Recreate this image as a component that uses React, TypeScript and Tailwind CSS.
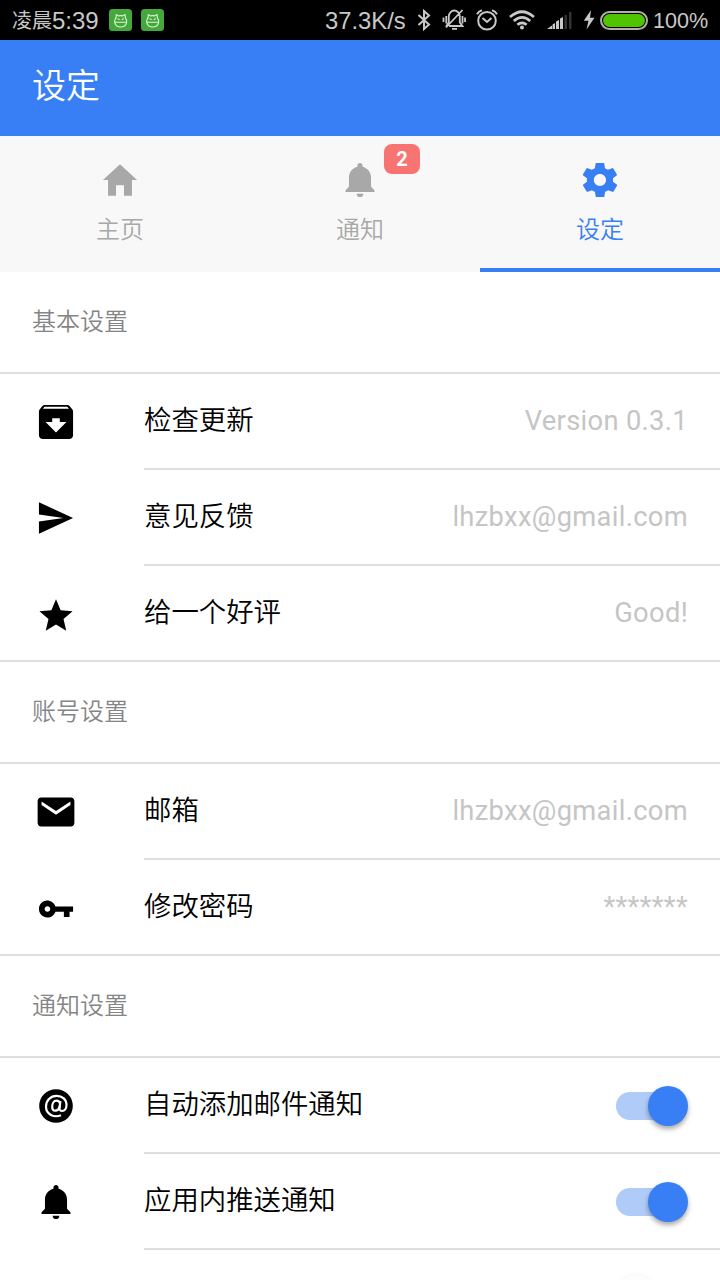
import React from "react";
import {
  IoMdHome,
  IoMdNotifications,
  IoMdSettings,
  IoMdArchive,
  IoMdSend,
  IoMdStar,
  IoMdMail,
  IoMdKey,
} from "react-icons/io";
import type { IconType } from "react-icons";

function CatBadge() {
  return (
    <svg width="23" height="22" viewBox="0 0 23 22" fill="none">
      <rect width="23" height="22" rx="3.5" fill="#43a93d" />
      <g stroke="#dcf0d0" strokeWidth="1.1" strokeLinecap="round" strokeLinejoin="round">
        <path d="M7 8.800 7.300 5.500 9.300 6.900Q11.700 6.300 14 6.900L16 5.500 16.400 8.800" />
        <path d="M7 8.800C4 13 6.500 18 11.700 18S19.400 13 16.400 8.800" />
        <path d="M6 13.200H17.400M9 9.800l1.300.7M14.400 9.800l-1.300.7" />
      </g>
    </svg>
  );
}

function StatusBar() {
  return (
    <div className="flex h-10 items-center bg-black pl-3 text-[#c8c8c8]">
      <div className="flex h-10 w-[97px] items-center whitespace-nowrap leading-10">
        <span className="w-10 pt-px text-[20px]">凌晨</span>
        <span className="pt-px text-[24px]">5:39</span>
      </div>
      <div className="flex gap-[9px]">
        <CatBadge />
        <CatBadge />
      </div>
      <span className="ml-[161px] w-[91px] whitespace-nowrap pt-[2px] text-[23.800px] leading-10">37.3K/s</span>
      <svg width="16" height="24" viewBox="0 0 16 24" fill="none" stroke="currentColor" strokeWidth="2">
        <path d="M2.500 7 13 16.500 8 21V3l5 4.500L2.500 17" />
      </svg>
      <svg className="ml-[10px]" width="24" height="24" viewBox="0 0 24 24" fill="none" stroke="currentColor" strokeWidth="1.800">
        <path d="M7 18H20.500L17.800 14.500V8.500C17.500 5 15 2.500 12.300 2.500S7 5 6.800 8.500V14.500L4 18.500M10 20.800h5M20.500 2 4 19.500M4.300 8v7.500M1.500 9.500v4.500M20.500 8v7.500M23 9.500v4.500" />
      </svg>
      <svg className="ml-[9px]" width="24" height="24" viewBox="0 0 24 24" fill="none" stroke="currentColor" strokeWidth="2">
        <circle cx="12" cy="12.800" r="8.800" />
        <path d="M7.500 10 12 14l4.500-4M2 6.300Q3.500 3.300 7 2.300M22 6.300Q20.500 3.300 17 2.300" />
      </svg>
      <svg className="ml-[10px]" width="26" height="22" viewBox="0 0 26 22" fill="none" stroke="currentColor" strokeWidth="2.700">
        <path d="M1 8Q13-2.500 25 8M4.800 12Q13 4.800 21.200 12M8.400 15.800Q13 11.800 17.600 15.800" />
        <circle cx="13" cy="18.500" r="2" fill="currentColor" stroke="none" />
      </svg>
      <svg className="ml-3" width="25" height="18" viewBox="0 0 25 18" fill="currentColor">
        <path d="M0 18 5 14.500V18ZM5.500 13.500 8 12V18H5.500ZM9 10.500 12 9V18H9ZM13 7.500 16 6V18h-3Z" />
        <path fill="#333" d="M17.500 4h2.500v14h-2.500ZM22 1h2.500v17H22Z" />
      </svg>
      <svg className="ml-[11px]" width="12" height="20" viewBox="0 0 12 20" fill="currentColor">
        <path d="M8 0 .8 10.800H5.500L3.500 19.500 11.500 7.800H7Z" />
      </svg>
      <svg className="ml-[5px]" width="48" height="19" viewBox="0 0 48 19">
        <rect x="1" y="1" width="46" height="17" rx="8.500" fill="black" stroke="#b5aeae" strokeWidth="2" />
        <rect x="3" y="3" width="42" height="13" rx="6.500" fill="#50c400" />
      </svg>
      <span className="ml-[5px] pt-px text-[21.600px] leading-10">100%</span>
    </div>
  );
}

interface TabProps {
  icon: IconType;
  label: string;
  active?: boolean;
  badge?: string;
}

function Tab({ icon: Icon, label, active, badge }: TabProps) {
  return (
    <div
      className={`relative flex flex-1 flex-col items-center border-b-4 pt-[23px] ${
        active ? "border-[#387ef5] text-[#387ef5]" : "border-transparent text-[#a8a8a8]"
      }`}
    >
      <Icon size={42} />
      <span className="mt-[11px] text-[24px] font-[350] leading-9">{label}</span>
      {badge && (
        <span className="absolute left-36 top-2 flex h-[30px] w-9 items-center justify-center rounded-lg bg-[#f87472] font-[Roboto,sans-serif] text-[20px] font-bold text-white">
          {badge}
        </span>
      )}
    </div>
  );
}

function AtCircle() {
  return (
    <svg width="34" height="34" viewBox="0 0 34 34" fill="none">
      <circle cx="17" cy="17" r="16.800" fill="black" />
      <g stroke="white" strokeWidth="2.200">
        <path d="M22 26.300C15 29 7 25.500 7 17.500 7 11.500 11.500 6.800 17.500 6.800 23.500 6.800 27.500 10.500 27.500 15.800 27.500 19.800 25.500 22 23.200 22 21.200 22 20.300 20.800 20.500 18.800L21.400 12.200" />
        <path d="M21 14.500C20.500 12.500 19.300 11.700 17.500 11.700 14.800 11.700 13.200 14.500 13.200 17.800 13.200 20.300 14.200 21.700 16.200 21.700 18.500 21.700 20.200 19.800 20.700 17" />
      </g>
    </svg>
  );
}

function Toggle() {
  return (
    <div className="relative h-10 w-[72px] pt-[6px]">
      <div className="h-7 w-14 rounded-full bg-[#afcbf8]" />
      <div className="absolute right-0 top-0 size-10 rounded-full bg-[#387ef5] shadow-[0_3px_5px_rgba(0,0,0,0.35)]" />
    </div>
  );
}

interface RowProps {
  icon: React.ReactNode;
  label: string;
  value?: string;
  toggle?: boolean;
  last?: boolean;
}

function Row({ icon, label, value, toggle, last }: RowProps) {
  return (
    <div className={`flex h-24 ${last ? "border-b-2 border-[#dedede]" : ""}`}>
      <div className={`flex w-36 items-center pl-8 text-black ${last ? "pt-[3px]" : ""}`}>
        <div className="flex w-[47px] justify-center">{icon}</div>
      </div>
      <div
        className={`flex flex-1 items-center justify-between pr-8 ${last ? "" : "border-b-2 border-[#dedede]"}`}
      >
        <span className="text-[27.400px] font-[350] leading-9 text-black">{label}</span>
        {value && (
          <span className="font-[Roboto,sans-serif] text-[27.300px] leading-9 tracking-[0.330px] text-[#c5c5c5]">{value}</span>
        )}
        {toggle && (
          <div className="pt-[2px]">
            <Toggle />
          </div>
        )}
      </div>
    </div>
  );
}

function SectionHeader({ children }: { children: React.ReactNode }) {
  return (
    <div className="flex h-[102px] items-center border-b-2 border-[#dedede] pl-8 text-[24px] font-[350] text-[#858585]">
      {children}
    </div>
  );
}

export default function App() {
  return (
    <div className="h-[1280px] w-[720px] overflow-hidden bg-white font-['Liberation_Sans','Noto_Sans_CJK_SC',sans-serif]">
      <StatusBar />
      <header className="flex h-24 items-center bg-[#387ef5] pb-[3px] pl-8 text-[34px] font-[350] text-white">设定</header>
      <nav className="flex h-[136px] bg-[#f8f8f8]">
        <Tab icon={IoMdHome} label="主页" />
        <Tab icon={IoMdNotifications} label="通知" badge="2" />
        <Tab icon={IoMdSettings} label="设定" active />
      </nav>
      <main>
        <SectionHeader>基本设置</SectionHeader>
        <Row icon={<IoMdArchive size={42} />} label="检查更新" value="Version 0.3.1" />
        <Row icon={<IoMdSend size={42} />} label="意见反馈" value="lhzbxx@gmail.com" />
        <Row icon={<IoMdStar size={42} />} label="给一个好评" value="Good!" last />
        <SectionHeader>账号设置</SectionHeader>
        <Row icon={<IoMdMail size={42} />} label="邮箱" value="lhzbxx@gmail.com" />
        <Row icon={<IoMdKey size={42} />} label="修改密码" value="*******" last />
        <SectionHeader>通知设置</SectionHeader>
        <Row icon={<AtCircle />} label="自动添加邮件通知" toggle />
        <Row icon={<IoMdNotifications size={42} />} label="应用内推送通知" toggle />
        <div className="flex justify-end pr-8 pt-[25px]">
          <div className="mr-8 size-10 rounded-full bg-[#fdfdfd] shadow-[0_0_5px_rgba(0,0,0,0.06)]" />
        </div>
      </main>
    </div>
  );
}
